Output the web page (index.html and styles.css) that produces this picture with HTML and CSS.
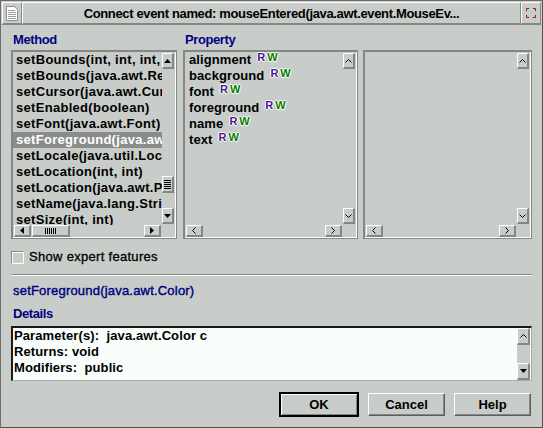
FILE: index.html
```html
<!DOCTYPE html>
<html lang="en">
<head>
    <meta charset="UTF-8">
    <title>Connect event</title>
    <link rel="stylesheet" href="styles.css">
</head>
<body>
<div class="window">
    <div class="titlebar">
        <div class="tb-box">
            <svg width="12" height="15" viewBox="0 0 12 15">
                <path d="M0.5 0.5H8.5L11.5 3.5V14.5H0.5Z" fill="#fff" stroke="#8c8f8c"/>
                <path d="M2 4.5H9M2 6.5H10M2 8.5H10M2 10.5H10M2 12.5H10" stroke="#9a9d9a"/>
            </svg>
        </div>
        <div class="title">Connect event named: mouseEntered(java.awt.event.MouseEv...</div>
        <div class="tb-box">
            <svg width="10" height="10" viewBox="0 0 10 10">
                <path d="M0.5 3V0.5H3M7 0.5H9.5V3M9.5 7V9.5H7M3 9.5H0.5V7" fill="none" stroke="#a01010"/>
            </svg>
        </div>
    </div>

    <div class="content">
        <div class="lists">
            <!-- список методов -->
            <div class="col col-method">
                <div class="label">Method</div>
                <div class="listbox">
                    <ul class="items">
                        <li>setBounds(int, int, int, int)</li>
                        <li>setBounds(java.awt.Rectangle)</li>
                        <li>setCursor(java.awt.Cursor)</li>
                        <li>setEnabled(boolean)</li>
                        <li>setFont(java.awt.Font)</li>
                        <li class="selected">setForeground(java.awt.Color)</li>
                        <li>setLocale(java.util.Locale)</li>
                        <li>setLocation(int, int)</li>
                        <li>setLocation(java.awt.Point)</li>
                        <li>setName(java.lang.String)</li>
                        <li>setSize(int, int)</li>
                    </ul>
                    <div class="vscroll">
                        <div class="sb-btn v"><svg width="7" height="4"><path d="M3.5 0 7 4H0z"/></svg></div>
                        <div class="track-a"></div>
                        <div class="thumb v"><span class="grip-h"></span></div>
                        <div class="track-b"></div>
                        <div class="sb-btn v"><svg width="7" height="4"><path d="M0 0H7L3.5 4z"/></svg></div>
                    </div>
                    <div class="hscroll">
                        <div class="sb-btn h"><svg width="4" height="7"><path d="M4 0V7L0 3.5z"/></svg></div>
                        <div class="thumb h"><span class="grip-v"></span></div>
                        <div class="track-b"></div>
                        <div class="sb-btn h"><svg width="4" height="7"><path d="M0 0 4 3.5 0 7z"/></svg></div>
                    </div>
                    <div class="corner"></div>
                </div>
            </div>

            <!-- свойства -->
            <div class="col col-prop">
                <div class="label">Property</div>
                <div class="listbox">
                    <ul class="items props">
                        <li>alignment<span class="rw"><b class="r">R</b><b class="w">W</b></span></li>
                        <li>background<span class="rw"><b class="r">R</b><b class="w">W</b></span></li>
                        <li>font<span class="rw"><b class="r">R</b><b class="w">W</b></span></li>
                        <li>foreground<span class="rw"><b class="r">R</b><b class="w">W</b></span></li>
                        <li>name<span class="rw"><b class="r">R</b><b class="w">W</b></span></li>
                        <li>text<span class="rw"><b class="r">R</b><b class="w">W</b></span></li>
                    </ul>
                    <div class="vscroll">
                        <div class="sb-btn v"><svg width="7" height="4"><path d="M0.5 3.5 3.5 0.5 6.5 3.5" fill="none" stroke="#000"/></svg></div>
                        <div class="track-b"></div>
                        <div class="sb-btn v"><svg width="7" height="4"><path d="M0.5 0.5 3.5 3.5 6.5 0.5" fill="none" stroke="#000"/></svg></div>
                    </div>
                    <div class="hscroll">
                        <div class="sb-btn h"><svg width="4" height="7"><path d="M3.5 0.5 0.5 3.5 3.5 6.5" fill="none" stroke="#000"/></svg></div>
                        <div class="track-b"></div>
                        <div class="sb-btn h"><svg width="4" height="7"><path d="M0.5 0.5 3.5 3.5 0.5 6.5" fill="none" stroke="#000"/></svg></div>
                    </div>
                    <div class="corner"></div>
                </div>
            </div>

            <!-- пустая панель -->
            <div class="col col-extra">
                <div class="label">&nbsp;</div>
                <div class="listbox">
                    <ul class="items"></ul>
                    <div class="vscroll">
                        <div class="sb-btn v"><svg width="7" height="4"><path d="M0.5 3.5 3.5 0.5 6.5 3.5" fill="none" stroke="#000"/></svg></div>
                        <div class="track-b"></div>
                        <div class="sb-btn v"><svg width="7" height="4"><path d="M0.5 0.5 3.5 3.5 6.5 0.5" fill="none" stroke="#000"/></svg></div>
                    </div>
                    <div class="hscroll">
                        <div class="sb-btn h"><svg width="4" height="7"><path d="M3.5 0.5 0.5 3.5 3.5 6.5" fill="none" stroke="#000"/></svg></div>
                        <div class="track-b"></div>
                        <div class="sb-btn h"><svg width="4" height="7"><path d="M0.5 0.5 3.5 3.5 0.5 6.5" fill="none" stroke="#000"/></svg></div>
                    </div>
                    <div class="corner"></div>
                </div>
            </div>
        </div>

        <label class="check-row"><span class="checkbox"></span>Show expert features</label>

        <div class="separator"></div>

        <div class="signature">setForeground(java.awt.Color)</div>
        <div class="label">Details</div>

        <div class="details">
            <div class="details-text">
                <div>Parameter(s):&nbsp; java.awt.Color c</div>
                <div>Returns: void</div>
                <div>Modifiers:&nbsp; public</div>
            </div>
            <div class="vscroll">
                <div class="sb-btn v"><svg width="7" height="4"><path d="M0.5 3.5 3.5 0.5 6.5 3.5" fill="none" stroke="#000"/></svg></div>
                <div class="track-b"></div>
                <div class="sb-btn v"><svg width="7" height="4"><path d="M0 0H7L3.5 4z"/></svg></div>
            </div>
        </div>

        <div class="buttons">
            <button class="default">OK</button>
            <button>Cancel</button>
            <button>Help</button>
        </div>
    </div>
</div>
</body>
</html>
```

FILE: styles.css
```css
* {
    box-sizing: border-box;
}
body {
    margin: 0;
    background-color: #c9cdc9;
    font: bold 13px "Liberation Sans", Arial, sans-serif;
    color: #000;
}
.window {
    width: 543px;
    height: 428px;
    border: 1px solid #6c6f6c;
    border-right-color: #505350;
    border-bottom-color: #505350;
    background-color: #c9cdc9;
}

/* заголовок окна */
.titlebar {
    display: flex;
    height: 23px;
    margin: 1px 1px 0 1px;
    border-bottom: 1px solid #848784;
}
.tb-box {
    width: 20px;
    display: flex;
    align-items: center;
    justify-content: center;
    border: 1px solid;
    border-color: #fff #848784 #848784 #fff;
}
.title {
    flex: 1;
    text-align: center;
    line-height: 21px;
    letter-spacing: -0.35px;
    border: 1px solid;
    border-color: #fff #848784 #848784 #fff;
}

.content {
    padding: 0 10px;
}

/* три списка */
.lists {
    display: flex;
}
.col-method {
    width: 166px;
    margin-right: 6px;
}
.col-prop {
    width: 175px;
    margin-right: 5px;
}
.col-extra {
    width: 169px;
}
.label {
    color: #000080;
    margin-top: 4px;
    line-height: 21px;
    padding-left: 2px;
    letter-spacing: -0.4px;
}
.listbox {
    height: 189px;
    display: grid;
    grid-template-columns: 1fr 14px;
    grid-template-rows: 1fr 13px;
    border: 1px solid #848784;
    border-top-width: 2px;
    border-left-width: 2px;
}
.items {
    list-style: none;
    margin: 0;
    padding: 0;
    overflow: hidden;
}
.items li {
    line-height: 16px;
    height: 16px;
    padding-left: 3px;
    white-space: nowrap;
    letter-spacing: 0.3px;
}
.items li.selected {
    background-color: #8a8d8a;
    color: #fff;
}
.props li {
    padding-left: 4px;
    letter-spacing: 0.1px;
}
.rw {
    display: inline-flex;
    gap: 2px;
    vertical-align: top;
    margin-left: 6px;
    margin-top: 1px;
    font-size: 11px;
    line-height: 9px;
    letter-spacing: 0;
}
.rw b {
    text-shadow: 1px 0 0 #fff, -1px 0 0 #fff, 0 1px 0 #fff, 0 -1px 0 #fff;
}
.rw .r {
    color: #4a1890;
}
.rw .w {
    color: #008000;
}

/* полосы прокрутки */
.vscroll {
    display: flex;
    flex-direction: column;
    padding: 1px 1px 1px 0;
    border-right: 1px solid #fff;
}
.hscroll {
    display: flex;
    padding: 0 1px 0 1px;
    border-bottom: 1px solid #fff;
}
.corner {
    border-right: 1px solid #fff;
    border-bottom: 1px solid #fff;
}
.sb-btn {
    display: flex;
    align-items: center;
    justify-content: center;
    background-color: #c9cdc9;
    border: 1px solid;
    border-color: #fff #848784 #848784 #fff;
    border-right-width: 2px;
    border-bottom-width: 2px;
}
.sb-btn.v {
    height: 16px;
}
.sb-btn.h {
    width: 17px;
}
.track-b {
    flex: 1;
}
.track-a {
    height: 107px;
}
.thumb {
    display: flex;
    align-items: center;
    justify-content: center;
    border: 1px solid;
    border-color: #fff #848784 #848784 #fff;
    border-right-width: 2px;
    border-bottom-width: 2px;
}
.thumb.v {
    height: 17px;
}
.thumb.h {
    width: 38px;
    margin-left: 1px;
}
.grip-h {
    width: 7px;
    height: 9px;
    background: repeating-linear-gradient(#000 0 1px, transparent 1px 2px);
}
.grip-v {
    width: 11px;
    height: 6px;
    background: repeating-linear-gradient(90deg, #000 0 1px, transparent 1px 2px);
}

/* флажок */
.check-row {
    display: flex;
    align-items: center;
    margin-top: 10px;
    height: 16px;
    line-height: 16px;
    font-weight: normal;
    -webkit-text-stroke: 0.3px #000;
    letter-spacing: 0.3px;
}
.checkbox {
    width: 13px;
    height: 13px;
    margin-right: 5px;
    border: 1px solid;
    border-color: #848784 #fff #fff #848784;
    box-shadow: inset 1px 1px 0 #fff;
}
.separator {
    margin-top: 9px;
    border-top: 1px solid #848784;
    border-bottom: 1px solid #fff;
}
.signature {
    color: #000080;
    margin-top: 7px;
    line-height: 16px;
    padding-left: 2px;
    font-weight: normal;
    -webkit-text-stroke: 0.4px #000080;
    letter-spacing: 0.2px;
}
.signature + .label {
    margin-top: 7px;
    line-height: 16px;
}

/* детали */
.details {
    margin-top: 4px;
    height: 55px;
    display: grid;
    grid-template-columns: 1fr 14px;
    background-color: #f8fffb;
    border: 1px solid #a8aca8;
    border-top: 2px solid #1a1a1a;
    border-left: 2px solid #1a1a1a;
}
.details-text {
    padding-left: 1px;
    line-height: 16px;
    letter-spacing: 0.1px;
}
.details .vscroll {
    background-color: #c9cdc9;
    padding: 0;
}
.details .sb-btn.v {
    height: 17px;
}

/* кнопки */
.buttons {
    display: flex;
    justify-content: flex-end;
    gap: 9px;
    margin-top: 11px;
    padding-right: 1px;
}
button {
    width: 77px;
    height: 23px;
    margin-top: 1px;
    font: bold 13px "Liberation Sans", Arial, sans-serif;
    color: #000;
    background-color: #c9cdc9;
    border: 1px solid;
    border-color: #fff #5a5d5a #5a5d5a #fff;
    box-shadow: inset -1px -1px 0 #848784;
    padding: 0;
}
button.default {
    width: 80px;
    height: 25px;
    margin-top: 0;
    border: 2px solid #000;
    box-shadow: inset 1px 1px 0 #fff, inset -1px -1px 0 #848784;
}
```
